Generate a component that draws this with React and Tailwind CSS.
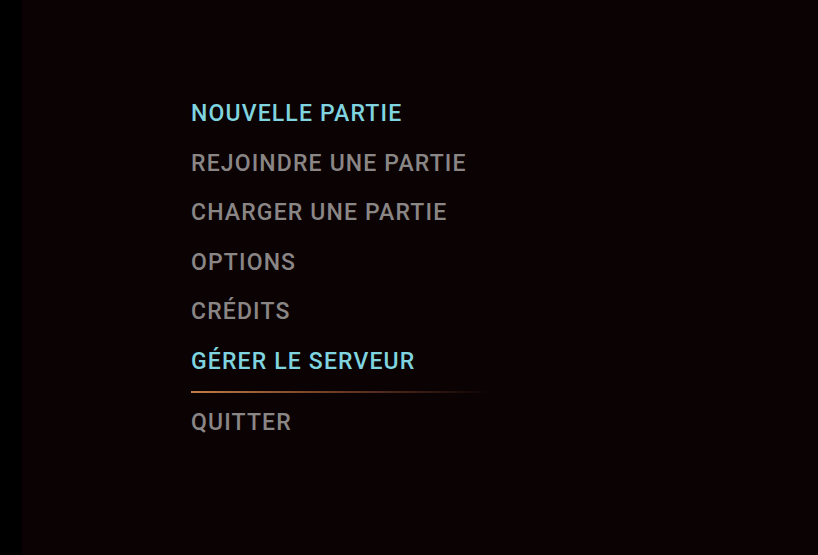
import React from "react";

const ITEMS = [
  { label: "NOUVELLE PARTIE", active: true },
  { label: "REJOINDRE UNE PARTIE" },
  { label: "CHARGER UNE PARTIE" },
  { label: "OPTIONS" },
  { label: "CRÉDITS" },
  { label: "GÉRER LE SERVEUR", active: true },
];

function MenuItem({ label, active }) {
  return (
    <button
      className={
        "text-left h-[49.5px] flex items-center pt-[2px] text-[23px] font-medium tracking-[0.05em] leading-none " +
        (active ? "text-[#7fd4df]" : "text-[#8a8686]")
      }
    >
      {label}
    </button>
  );
}

export default function App() {
  return (
    <div
      className="w-[818px] h-[555px] flex bg-black overflow-hidden"
      style={{ fontFamily: 'Roboto, "DejaVu Sans", sans-serif' }}
    >
      <div className="w-[22px] bg-black" />
      <div className="flex-1 bg-[#0b0204] pl-[169px] pt-[88px]">
        <nav className="flex flex-col">
          {ITEMS.map((it) => (
            <MenuItem key={it.label} {...it} />
          ))}
          <div className="mt-[6px] mb-[4px] w-[300px] h-[2px] bg-gradient-to-r from-[#c27d48] via-[#6a3a22] to-transparent" />
          <MenuItem label="QUITTER" />
        </nav>
      </div>
    </div>
  );
}
